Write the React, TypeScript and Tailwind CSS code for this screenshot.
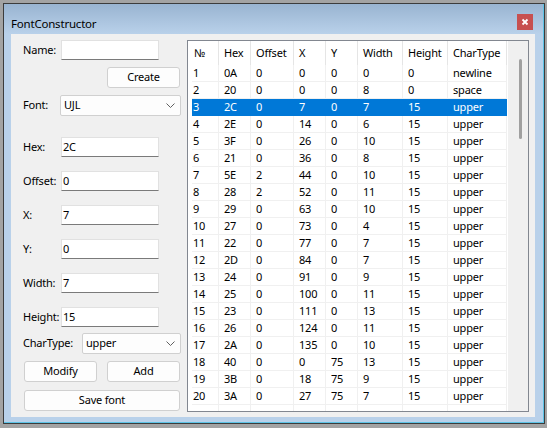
import React from "react";

const rows: string[][] = [
  ["1", "0A", "0", "0", "0", "0", "0", "newline"],
  ["2", "20", "0", "0", "0", "8", "0", "space"],
  ["3", "2C", "0", "7", "0", "7", "15", "upper"],
  ["4", "2E", "0", "14", "0", "6", "15", "upper"],
  ["5", "3F", "0", "26", "0", "10", "15", "upper"],
  ["6", "21", "0", "36", "0", "8", "15", "upper"],
  ["7", "5E", "2", "44", "0", "10", "15", "upper"],
  ["8", "28", "2", "52", "0", "11", "15", "upper"],
  ["9", "29", "0", "63", "0", "10", "15", "upper"],
  ["10", "27", "0", "73", "0", "4", "15", "upper"],
  ["11", "22", "0", "77", "0", "7", "15", "upper"],
  ["12", "2D", "0", "84", "0", "7", "15", "upper"],
  ["13", "24", "0", "91", "0", "9", "15", "upper"],
  ["14", "25", "0", "100", "0", "11", "15", "upper"],
  ["15", "23", "0", "111", "0", "13", "15", "upper"],
  ["16", "26", "0", "124", "0", "11", "15", "upper"],
  ["17", "2A", "0", "135", "0", "10", "15", "upper"],
  ["18", "40", "0", "0", "75", "13", "15", "upper"],
  ["19", "3B", "0", "18", "75", "9", "15", "upper"],
  ["20", "3A", "0", "27", "75", "7", "15", "upper"],
  ["", "", "", "", "", "", "", ""],
];

const headers = ["№", "Hex", "Offset", "X", "Y", "Width", "Height", "CharType"];
const colW = ["w-[27px]", "w-[32px]", "w-[43px]", "w-[32px]", "w-[32px]", "w-[45px]", "w-[45px]", "w-[59px]"];

const font = { fontFamily: '"Noto Sans", "Open Sans", sans-serif', letterSpacing: "-0.2px" };

function TextBox({ value }: { value?: string }) {
  return (
    <div className="w-[98px] h-[20px] bg-white border border-[#e1e1e1] border-b-[#7a7a7a] flex items-center pl-[1px] text-[11px] text-black">
      {value}
    </div>
  );
}

function Chevron() {
  return (
    <svg width="9" height="5" viewBox="0 0 9 5" className="shrink-0">
      <path d="M0.5 0.5 L4.5 4.5 L8.5 0.5" fill="none" stroke="#606060" strokeWidth="1" />
    </svg>
  );
}

function Combo({ value, w }: { value: string; w: string }) {
  return (
    <div className={`${w} h-[21px] bg-[#fdfdfd] border border-[#d0d0d0] rounded-[2px] flex items-center pl-[3px] pr-[5px] text-[11px] text-black`}>
      <span className="flex-1">{value}</span>
      <Chevron />
    </div>
  );
}

function Button({ label, w }: { label: string; w: string }) {
  return (
    <div className={`${w} h-[21px] bg-[#fdfdfd] border border-[#d0d0d0] rounded-[3px] flex items-center justify-center text-[11px] text-black`}>
      {label}
    </div>
  );
}

function FieldRow({ label, value, mt }: { label: string; value?: string; mt: string }) {
  return (
    <div className={`flex items-center ${mt}`}>
      <div className="w-[38px] text-[11px] text-black">{label}</div>
      <TextBox value={value} />
    </div>
  );
}

export default function App() {
  return (
    <div className="w-[547px] h-[428px] bg-[#a3a3a3] pt-[3px] pl-[3px] overflow-hidden" style={font}>
      <div className="w-[542px] h-[421px] border border-[#3c3c3c]">
        <div className="w-[540px] h-[419px] border-r border-b border-[#5cc3e6] bg-[#b9d1ea] flex flex-col">
          {/* title bar */}
          <div className="h-[30px] bg-gradient-to-b from-[#99b4d1] to-[#b9d1ea] flex items-start">
            <div className="ml-[7px] mt-[11px] text-[11.5px] text-black leading-[18px]">FontConstructor</div>
            <div className="ml-auto mr-[10px] mt-[10px] w-[16px] h-[16px] bg-[#c75050] flex items-center justify-center">
              <svg width="8" height="8" viewBox="0 0 8 8">
                <path d="M1.5 1.5 L6.5 6.5 M6.5 1.5 L1.5 6.5" stroke="white" strokeWidth="1.8" />
              </svg>
            </div>
          </div>
          {/* client */}
          <div className="ml-[7px] w-[524px] h-[383px] bg-[#f0f0f0] flex">
            {/* left panel */}
            <div className="w-[176px] pl-[12px] flex flex-col">
              <FieldRow label="Name:" mt="mt-[6px]" />
              <div className="mt-[7px] ml-[84px]">
                <Button label="Create" w="w-[73px]" />
              </div>
              <div className="flex items-center mt-[7px]">
                <div className="w-[37px] text-[11px] text-black">Font:</div>
                <Combo value="UJL" w="w-[121px]" />
              </div>
              <FieldRow label="Hex:" value="2C" mt="mt-[21px]" />
              <FieldRow label="Offset:" value="0" mt="mt-[14px]" />
              <FieldRow label="X:" value="7" mt="mt-[14px]" />
              <FieldRow label="Y:" value="0" mt="mt-[14px]" />
              <FieldRow label="Width:" value="7" mt="mt-[14px]" />
              <FieldRow label="Height:" value="15" mt="mt-[14px]" />
              <div className="flex items-center mt-[6px]">
                <div className="w-[59px] text-[11px] text-black">CharType:</div>
                <Combo value="upper" w="w-[99px]" />
              </div>
              <div className="flex mt-[7px] ml-[1px] gap-[10px]">
                <Button label="Modify" w="w-[73px]" />
                <Button label="Add" w="w-[73px]" />
              </div>
              <div className="mt-[8px] ml-[1px]">
                <Button label="Save font" w="w-[156px]" />
              </div>
            </div>
            {/* list view */}
            <div className="mt-[6px] w-[342px] h-[372px] border border-[#828790] bg-white flex overflow-hidden">
              <div className="w-[320px] flex flex-col text-[11px] text-black overflow-hidden">
                <div className="h-[24px] flex shrink-0">
                  {headers.map((h, i) => (
                    <div
                      key={h}
                      className={`${i === 0 ? "w-[31px] pl-[6px]" : colW[i] + " pl-[5px]"} h-full border-r border-[#e5e5e5] flex items-center`}
                    >
                      {h}
                    </div>
                  ))}
                </div>
                {rows.map((r, ri) => {
                  const sel = ri === 2;
                  return (
                    <div key={ri} className="h-[17px] flex shrink-0 pl-[4px]">
                      {r.map((c, ci) => (
                        <div
                          key={ci}
                          className={`${colW[ci]} ${ci === 0 ? "pl-[1px]" : "pl-[5px]"} h-full flex items-center border-b ${
                            sel ? "bg-[#0078d7] text-white border-[#0078d7]" : "border-[#f0f0f0] border-r"
                          }`}
                        >
                          {c}
                        </div>
                      ))}
                    </div>
                  );
                })}
              </div>
              <div className="flex-1 bg-[#f0f0f0] relative">
                <div className="absolute left-[11px] top-[18px] w-[3px] h-[80px] bg-[#a0a0a0] rounded-full" />
              </div>
            </div>
          </div>
        </div>
      </div>
    </div>
  );
}
